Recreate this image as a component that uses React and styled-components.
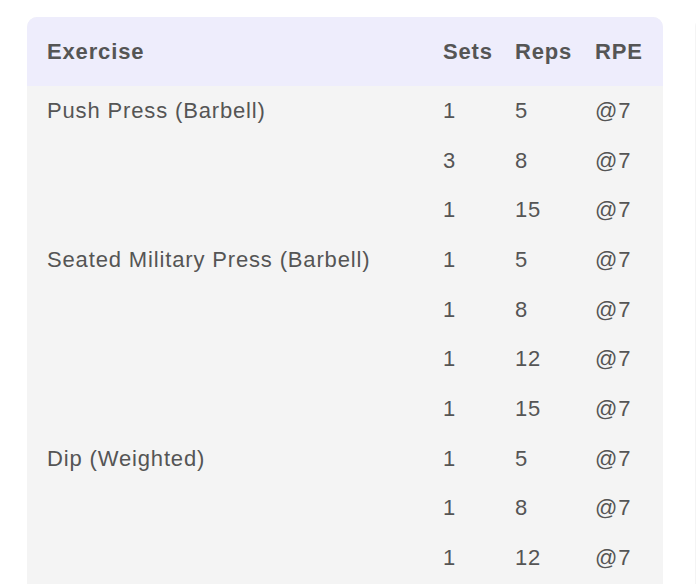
import styled, { createGlobalStyle } from 'styled-components'

const GlobalStyle = createGlobalStyle`
  html, body {
    margin: 0;
    background: #ffffff;
    font-family: "Liberation Sans", Arial, Helvetica, sans-serif;
    overflow: hidden;
  }
`

const Page = styled.div`
  display: flex;
  gap: 32px;
  padding: 17px 0 0 27px;
  width: 100vw;
  height: 100vh;
  box-sizing: border-box;
  overflow: hidden;
`

const Card = styled.div`
  width: 636px;
  flex-shrink: 0;
  background-color: #f4f4f4;
  border-radius: 10px 10px 0 0;
  overflow: hidden;
`

const Table = styled.table`
  width: 100%;
  border-collapse: collapse;
  color: #555555;
  font-size: 22px;
  letter-spacing: 0.85px;
`

const HeadRow = styled.tr`
  background-color: #eeedfc;
  height: 69px;
`

const Th = styled.th`
  font-weight: 700;
  text-align: left;
  padding: 0 ${props => props.$last ? '20px' : '0'} 0 ${props => props.$first ? '20px' : '0'};
  width: ${props => props.$w || 'auto'};
`

const Row = styled.tr`
  height: 49.7px;
`

const Td = styled.td`
  padding: 0 ${props => props.$last ? '20px' : '0'} 0 ${props => props.$first ? '20px' : '0'};
  vertical-align: middle;
`

const workout = [
  { name: 'Push Press (Barbell)', sets: [[1, 5], [3, 8], [1, 15]] },
  { name: 'Seated Military Press (Barbell)', sets: [[1, 5], [1, 8], [1, 12], [1, 15]] },
  { name: 'Dip (Weighted)', sets: [[1, 5], [1, 8], [1, 12]] },
]

export default function App() {
  return (
    <>
      <GlobalStyle />
      <Page>
        <Card>
          <Table>
            <thead>
              <HeadRow>
                <Th $first>Exercise</Th>
                <Th $w="72px">Sets</Th>
                <Th $w="80px">Reps</Th>
                <Th $last $w="48px">RPE</Th>
              </HeadRow>
            </thead>
            <tbody>
              {workout.flatMap(ex =>
                ex.sets.map(([sets, reps], i) => (
                  <Row key={ex.name + i}>
                    <Td $first>{i === 0 ? ex.name : ''}</Td>
                    <Td>{sets}</Td>
                    <Td>{reps}</Td>
                    <Td $last>@7</Td>
                  </Row>
                ))
              )}
            </tbody>
          </Table>
        </Card>
        <Card />
      </Page>
    </>
  )
}
